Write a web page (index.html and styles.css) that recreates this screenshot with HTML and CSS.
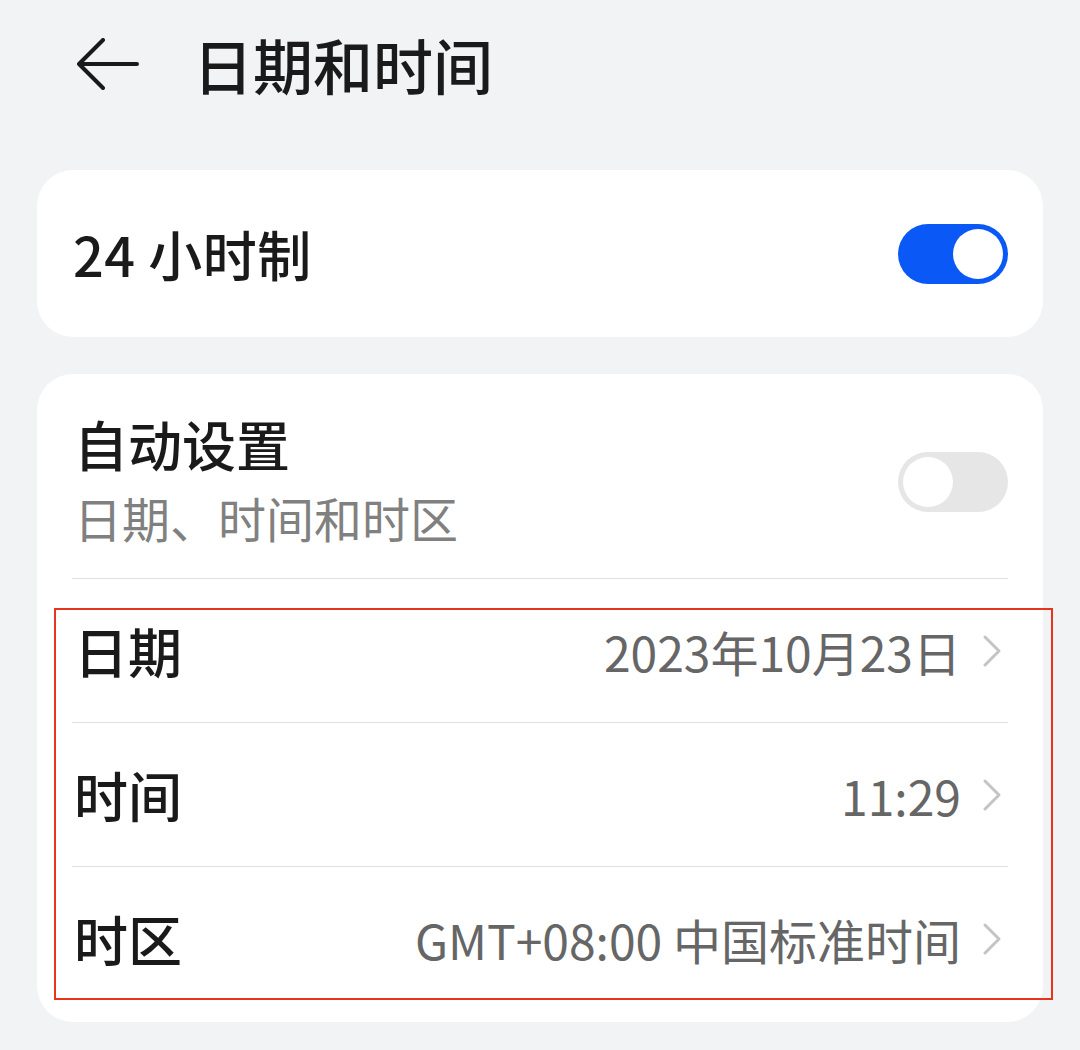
FILE: index.html
```html
<!DOCTYPE html>
<html lang="zh-CN">
<head>
<meta charset="utf-8">
<link rel="stylesheet" href="styles.css">
</head>
<body>
<div class="page">
  <header class="header">
    <svg class="back" width="62" height="52" viewBox="0 0 62 52">
      <path d="M2 26 H60 M26 2 L2 26 L26 50" fill="none" stroke="#1a1a1a" stroke-width="4" stroke-linecap="round" stroke-linejoin="round"/>
    </svg>
    <h1 class="title">日期和时间</h1>
  </header>

  <section class="card card-single">
    <span class="label">24 小时制</span>
    <span class="toggle on"><span class="knob"></span></span>
  </section>

  <section class="card card-list">
    <div class="auto-row">
      <div class="auto-text">
        <div class="label">自动设置</div>
        <div class="sub">日期、时间和时区</div>
      </div>
      <span class="toggle off"><span class="knob"></span></span>
    </div>
    <div class="row">
      <span class="label">日期</span>
      <span class="value">2023年10月23日</span>
      <svg class="chev" width="20" height="34" viewBox="0 0 20 34"><path d="M3 3 L17 17 L3 31" fill="none" stroke="#c4c4c4" stroke-width="3" stroke-linecap="round" stroke-linejoin="round"/></svg>
    </div>
    <div class="row">
      <span class="label">时间</span>
      <span class="value">11:29</span>
      <svg class="chev" width="20" height="34" viewBox="0 0 20 34"><path d="M3 3 L17 17 L3 31" fill="none" stroke="#c4c4c4" stroke-width="3" stroke-linecap="round" stroke-linejoin="round"/></svg>
    </div>
    <div class="row last">
      <span class="label">时区</span>
      <span class="value">GMT+08:00 中国标准时间</span>
      <svg class="chev" width="20" height="34" viewBox="0 0 20 34"><path d="M3 3 L17 17 L3 31" fill="none" stroke="#c4c4c4" stroke-width="3" stroke-linecap="round" stroke-linejoin="round"/></svg>
    </div>
    <div class="highlight"></div>
  </section>
</div>
</body>
</html>
```

FILE: styles.css
```css
html, body {
  margin: 0;
  padding: 0;
  background: #f1f3f5;
}
body {
  font-family: "Noto Sans CJK SC", "Noto Sans", sans-serif;
  color: #1a1a1a;
  width: 1080px;
  height: 1050px;
  overflow: hidden;
}
.page {
  display: flex;
  flex-direction: column;
}
.header {
  display: flex;
  align-items: center;
  height: 128px;
  padding-left: 77px;
}
.back {
  display: block;
}
.title {
  margin: 0 0 0 54px;
  font-size: 60px;
  font-weight: 500;
  line-height: 1;
  color: #1a1a1a;
}
.card {
  background: #ffffff;
  margin: 0 37px;
  border-radius: 36px;
}
.card-single {
  margin-top: 42px;
  height: 167px;
  box-sizing: border-box;
  display: flex;
  align-items: center;
  justify-content: space-between;
  padding: 0 35px 0 36px;
}
.label {
  font-size: 54px;
  font-weight: 500;
  line-height: 1;
  color: #1a1a1a;
}
.card-single .label {
  font-size: 54px;
  letter-spacing: 0.5px;
}
.toggle {
  position: relative;
  display: block;
  width: 110px;
  height: 60px;
  border-radius: 30px;
  box-sizing: border-box;
  flex: none;
}
.toggle .knob {
  position: absolute;
  top: 5px;
  width: 50px;
  height: 50px;
  border-radius: 50%;
  background: #ffffff;
}
.toggle.on {
  background: #0a59f7;
}
.toggle.on .knob {
  right: 5px;
}
.toggle.off {
  background: #e6e6e6;
  margin-top: 12px;
}
.toggle.off .knob {
  left: 5px;
}
.card-list {
  position: relative;
  margin-top: 37px;
  padding: 0 35px 11px 35px;
}
.auto-row {
  height: 205px;
  box-sizing: border-box;
  display: flex;
  align-items: center;
  justify-content: space-between;
  border-bottom: 1.5px solid #dedede;
  padding-left: 2px;
}
.auto-text {
  display: flex;
  flex-direction: column;
  gap: 22px;
  padding-top: 6px;
}
.sub {
  font-size: 48px;
  line-height: 1;
  color: #808080;
}
.row {
  height: 144px;
  box-sizing: border-box;
  display: flex;
  align-items: center;
  border-bottom: 1.5px solid #dedede;
  padding-left: 2px;
}
.row.last {
  border-bottom: none;
}
.row .label {
  flex: 1;
}
.value {
  font-size: 48px;
  line-height: 1;
  color: #666666;
  margin-right: 21px;
}
.chev {
  display: block;
  margin-right: 6px;
}
.highlight {
  position: absolute;
  left: 17px;
  top: 234px;
  width: 999px;
  height: 392px;
  box-sizing: border-box;
  border: 2.5px solid #e8341c;
  pointer-events: none;
}
```
